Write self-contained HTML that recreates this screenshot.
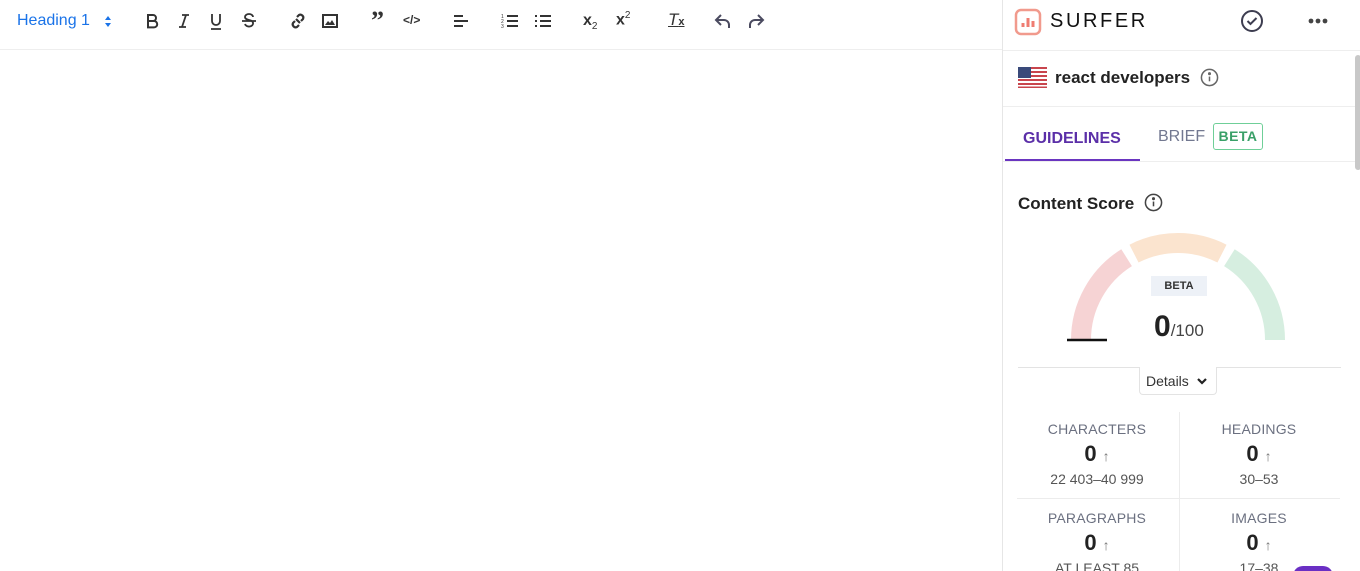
<!DOCTYPE html>
<html style="width:1360px;height:571px;overflow:hidden"><head><meta charset="utf-8"><style>
*{box-sizing:border-box;margin:0;padding:0}
body{width:1360px;height:571px;overflow:hidden;background:#fff;font-family:"Liberation Sans",sans-serif;position:relative;color:#222}
.tb{position:absolute;left:0;top:0;width:1002px;height:50px;border-bottom:1px solid #eee}
.ic{position:absolute;top:11px;width:20px;height:20px}
.panel{position:absolute;left:1002px;top:0;width:358px;height:571px;border-left:1px solid #e6e6e6;overflow:hidden}
.t{position:absolute;white-space:nowrap}
.lbl{font-size:14px;color:#6b7080;letter-spacing:.2px;text-align:center;width:162px}
.num{font-size:22px;font-weight:bold;color:#222;text-align:center;width:162px}
.num span{font-size:14px;font-weight:normal;color:#777;margin-left:6px}
.rng{font-size:14px;color:#555;text-align:center;width:162px}
</style></head><body>
<div class="tb">
<div class="t" style="left:17px;top:12px;font-size:16px;color:#1a73e8">Heading 1</div>
<svg class="ic" style="left:100px" viewBox="0 0 20 20"><path d="M5 9l3-4 3 4z M5 12l3 4 3-4z" fill="#1a73e8"/></svg>
<svg class="ic" style="left:142px" viewBox="0 0 20 20" fill="none" stroke="#333" stroke-width="2"><path d="M6 4h5a3 3 0 010 6H6zM6 10h6a3.2 3.2 0 010 6.4H6z"/></svg>
<svg class="ic" style="left:174px" viewBox="0 0 20 20" fill="none" stroke="#333" stroke-width="1.8"><path d="M8 4h7M5 16h7M12 4l-4 12"/></svg>
<svg class="ic" style="left:206px" viewBox="0 0 20 20" fill="none" stroke="#333" stroke-width="1.8"><path d="M6 3v7a4 4 0 008 0V3M5 18h10"/></svg>
<svg class="ic" style="left:239px" viewBox="0 0 20 20" fill="none" stroke="#333" stroke-width="1.8"><path d="M14 6a4 3 0 00-8 0c0 4 8 2 8 6a4 3 0 01-8 1M3 10h14"/></svg>
<svg class="ic" style="left:288px" viewBox="0 0 20 20" fill="none" stroke="#333" stroke-width="2.2"><path d="M9 6l2-2a3 3 0 014 4l-2 2M11 14l-2 2a3 3 0 01-4-4l2-2M8 8l4 4"/></svg>
<svg class="ic" style="left:320px" viewBox="0 0 20 20"><rect x="3" y="4" width="14" height="12" fill="none" stroke="#333" stroke-width="2"/><path d="M5 14l3-4 2 2 2-3 3 5z" fill="#333"/></svg>
<div class="t" style="left:371px;top:6px;font-size:26px;font-weight:bold;color:#333;font-family:'Liberation Serif',serif">”</div>
<div class="t" style="left:403px;top:13px;font-size:12px;font-weight:bold;color:#333">&lt;/&gt;</div>
<svg class="ic" style="left:451px" viewBox="0 0 20 20" stroke="#333" stroke-width="2"><path d="M3 5h9M3 10h14M3 15h9"/></svg>
<svg class="ic" style="left:500px" viewBox="0 0 20 20" stroke="#333" stroke-width="2"><path d="M7 5h11M7 10h11M7 15h11"/><text x="1" y="7" font-size="5" fill="#333" stroke="none">1</text><text x="1" y="12" font-size="5" fill="#333" stroke="none">2</text><text x="1" y="17" font-size="5" fill="#333" stroke="none">3</text></svg>
<svg class="ic" style="left:533px" viewBox="0 0 20 20" stroke="#333" stroke-width="2"><path d="M7 5h11M7 10h11M7 15h11M2 5h2M2 10h2M2 15h2"/></svg>
<div class="t" style="left:583px;top:12px;font-size:16px;font-weight:bold;color:#333">x<sub style="font-size:10px;font-weight:normal">2</sub></div>
<div class="t" style="left:616px;top:10px;font-size:16px;font-weight:bold;color:#333">x<sup style="font-size:10px;font-weight:normal">2</sup></div>
<div class="t" style="left:668px;top:10px;font-size:17px;font-style:italic;color:#333;text-decoration:underline">T<span style="font-size:11px;font-weight:bold;font-style:normal">x</span></div>
<svg class="ic" style="left:713px" viewBox="0 0 20 20" fill="none" stroke="#4b4b60" stroke-width="2"><path d="M8 4L3 9l5 5M3 9h8a5 5 0 015 5v3"/></svg>
<svg class="ic" style="left:746px" viewBox="0 0 20 20" fill="none" stroke="#4b4b60" stroke-width="2"><path d="M12 4l5 5-5 5M17 9H9a5 5 0 00-5 5v3"/></svg>
</div>
<div class="panel">
<svg style="position:absolute;left:11px;top:8px" width="28" height="28" viewBox="0 0 28 28" fill="none"><rect x="2" y="2" width="24" height="24" rx="5" stroke="#f19a8d" stroke-width="2.5"/><path d="M9 19v-4M14 19v-9M19 19v-6" stroke="#ef7c72" stroke-width="3"/></svg>
<div class="t" style="left:47px;top:10px;font-size:20px;letter-spacing:2.6px;color:#111">SURFER</div>
<svg style="position:absolute;left:237px;top:9px" width="24" height="24" viewBox="0 0 24 24" fill="none" stroke="#3d3d50" stroke-width="2"><circle cx="12" cy="12" r="10"/><path d="M7.5 12l3 3 6-6"/></svg>
<svg style="position:absolute;left:304px;top:17px" width="22" height="8"><circle cx="4" cy="4" r="2.4" fill="#444"/><circle cx="11" cy="4" r="2.4" fill="#444"/><circle cx="18" cy="4" r="2.4" fill="#444"/></svg>
<div style="position:absolute;left:0;top:50px;width:358px;border-top:1px solid #eee"></div>
<div style="position:absolute;left:352px;top:55px;width:6px;height:115px;background:#c8c8c8;border-radius:3px"></div>
<svg style="position:absolute;left:15px;top:67px" width="29" height="21"><rect width="29" height="21" fill="#fff"/><g fill="#c8454d"><rect y="0" width="29" height="2"/><rect y="4" width="29" height="2"/><rect y="8" width="29" height="2"/><rect y="12" width="29" height="2"/><rect y="16" width="29" height="2"/><rect y="19.5" width="29" height="1.5"/></g><rect width="13" height="11" fill="#3a4a7a"/></svg>
<div class="t" style="left:52px;top:68px;font-size:17px;font-weight:bold;color:#222">react developers</div>
<svg style="position:absolute;left:197px;top:68px" width="19" height="19" viewBox="0 0 20 20" fill="none" stroke="#666" stroke-width="1.6"><circle cx="10" cy="10" r="8.5"/><path d="M10 9v5"/><circle cx="10" cy="6" r=".8" fill="#666"/></svg>
<div style="position:absolute;left:0;top:106px;width:352px;border-top:1px solid #eee"></div>
<div class="t" style="left:20px;top:130px;font-size:16px;color:#5b2fa8;font-weight:bold">GUIDELINES</div>
<div style="position:absolute;left:2px;top:159px;width:135px;height:2px;background:#6a35c0"></div>
<div style="position:absolute;left:0;top:161px;width:352px;border-top:1px solid #eee"></div>
<div class="t" style="left:155px;top:128px;font-size:16px;color:#727890">BRIEF</div>
<div class="t" style="left:210px;top:123px;width:50px;height:27px;border:1px solid #6fcf98;border-radius:3px;color:#3aa068;font-size:14px;font-weight:bold;text-align:center;line-height:25px;letter-spacing:.5px">BETA</div>
<div class="t" style="left:15px;top:194px;font-size:17px;font-weight:bold;color:#222">Content Score</div>
<svg style="position:absolute;left:141px;top:193px" width="19" height="19" viewBox="0 0 20 20" fill="none" stroke="#444" stroke-width="1.6"><circle cx="10" cy="10" r="8.5"/><path d="M10 9v5"/><circle cx="10" cy="6" r=".8" fill="#444"/></svg>
<div style="position:absolute;left:290px;top:566px;width:40px;height:20px;border-radius:20px;background:#6a2fc4"></div>
</div>
<svg style="position:absolute;left:0;top:0" width="1360" height="571" fill="none" stroke-width="20">
<path d="M1081 340A97 97 0 0 1 1126.6 257.7" stroke="#f6d3d4"/>
<path d="M1134 253.6A97 97 0 0 1 1222 253.6" stroke="#fbe4cf"/>
<path d="M1229.4 257.7A97 97 0 0 1 1275 340" stroke="#d6eee0"/>
<path d="M1067 340h40" stroke="#111" stroke-width="2.5"/>
</svg>
<div class="t" style="left:1151px;top:276px;width:56px;height:20px;background:#edf1f7;font-size:11px;font-weight:bold;color:#333;text-align:center;line-height:20px">BETA</div>
<div class="t" style="left:1154px;top:310px;font-size:30px;font-weight:bold;color:#222">0<span style="font-size:17px;font-weight:normal;color:#444">/100</span></div>
<div style="position:absolute;left:1018px;top:367px;width:323px;border-top:1px solid #e3e3e3"></div>
<div class="t" style="left:1139px;top:367px;width:78px;height:28px;background:#fff;border:1px solid #e3e3e3;border-top:none;border-radius:0 0 4px 4px;font-size:14px;color:#333;padding:6px 0 0 6px">Details <svg width="12" height="9" viewBox="0 0 12 9" style="margin-left:3px"><path d="M2 2l4 4 4-4" fill="none" stroke="#222" stroke-width="2.2"/></svg></div>
<div style="position:absolute;left:1179px;top:412px;height:159px;border-left:1px solid #ececec"></div>
<div style="position:absolute;left:1017px;top:498px;width:323px;border-top:1px solid #ececec"></div>
<div class="t lbl" style="left:1016px;top:421px">CHARACTERS</div>
<div class="t num" style="left:1016px;top:441px">0<span>↑</span></div>
<div class="t rng" style="left:1016px;top:471px">22 403–40 999</div>
<div class="t lbl" style="left:1178px;top:421px">HEADINGS</div>
<div class="t num" style="left:1178px;top:441px">0<span>↑</span></div>
<div class="t rng" style="left:1178px;top:471px">30–53</div>
<div class="t lbl" style="left:1016px;top:510px">PARAGRAPHS</div>
<div class="t num" style="left:1016px;top:530px">0<span>↑</span></div>
<div class="t rng" style="left:1016px;top:560px;height:11px;overflow:hidden">AT LEAST 85</div>
<div class="t lbl" style="left:1178px;top:510px">IMAGES</div>
<div class="t num" style="left:1178px;top:530px">0<span>↑</span></div>
<div class="t rng" style="left:1178px;top:560px;height:11px;overflow:hidden">17–38</div>
</body></html>
